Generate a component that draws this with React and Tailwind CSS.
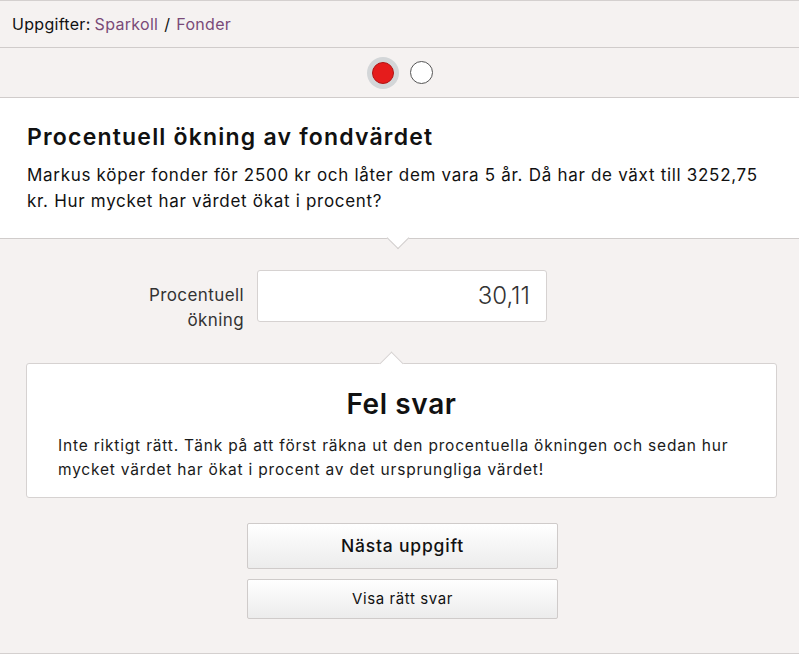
export default function App() {
  const font = { fontFamily: "Inter, 'Noto Sans', sans-serif" };
  return (
    <div className="w-[799px] h-[654px] bg-[#f5f2f1] text-[#111] flex flex-col border-t border-b border-[#d4d0cf]" style={font}>
      <div className="h-[47px] flex items-center px-3 text-[16px] tracking-[0.3px] border-b border-[#d0cccb] shrink-0">
        <span>Uppgifter:</span>
        <span className="ml-1 text-[#7a4a78]">Sparkoll</span>
        <span className="mx-1.5">/</span>
        <span className="text-[#7a4a78]">Fonder</span>
      </div>
      <div className="h-[50px] flex items-center justify-center gap-[11px] border-b border-[#d0cccb] shrink-0">
        <div className="w-[32px] h-[32px] rounded-full bg-[#d3d6d8] flex items-center justify-center">
          <div className="w-[22px] h-[22px] rounded-full bg-[#e51c1c] border border-[#b01515]" />
        </div>
        <div className="w-[23px] h-[23px] rounded-full bg-white border border-[#555]" />
      </div>
      <div className="relative bg-white border-b border-[#d0cccb] px-[27px] pt-[23px] pb-[24px] shrink-0">
        <h1 className="text-[23px] font-semibold leading-[32px] tracking-[1.2px]">Procentuell ökning av fondvärdet</h1>
        <p className="mt-[9px] text-[17px] leading-[26px] tracking-[0.7px]">
          Markus köper fonder för 2500 kr och låter dem vara 5 år. Då har de växt till 3252,75 kr. Hur mycket har värdet ökat i procent?
        </p>
        <div className="absolute left-[390px] bottom-[-8px] w-[16px] h-[16px] bg-white border-r border-b border-[#d0cccb] rotate-45" />
      </div>
      <div className="flex items-start pt-[31px] pl-[136px]">
        <div className="w-[108px] text-right text-[17px] leading-[25px] tracking-[0.4px] text-[#333] pt-[13px]">Procentuell ökning</div>
        <div className="ml-[13px] w-[290px] h-[52px] bg-white border border-[#d6d2d1] rounded-[3px] flex items-center justify-end pr-[16px] text-[24px] font-light text-[#333]">30,11</div>
      </div>
      <div className="relative ml-[26px] mr-[22px] mt-[30px] bg-white border border-[#d6d2d1] rounded-[3px] h-[135px] px-[31px] pt-[22px]">
        <div className="absolute left-[356px] top-[-9px] w-[17px] h-[17px] bg-white border-l border-t border-[#d6d2d1] rotate-45" />
        <h2 className="text-center text-[28px] font-semibold leading-[36px] tracking-[0.6px]">Fel svar</h2>
        <p className="mt-[12px] text-[15.5px] leading-[24px] text-[#1a1a1a] tracking-[0.8px]">
          Inte riktigt rätt. Tänk på att först räkna ut den procentuella ökningen och sedan hur mycket värdet har ökat i procent av det ursprungliga värdet!
        </p>
      </div>
      <div className="flex flex-col items-center mt-[25px] gap-[10px] pl-[6px]">
        <button className="w-[311px] h-[46px] border border-[#cfcbca] rounded-[2px] bg-gradient-to-b from-white to-[#ececec] text-[17.5px] tracking-[0.8px] font-medium text-[#111]">Nästa uppgift</button>
        <button className="w-[311px] h-[40px] border border-[#cfcbca] rounded-[2px] bg-gradient-to-b from-white to-[#ececec] text-[15px] tracking-[0.6px] font-normal text-[#111]">Visa rätt svar</button>
      </div>
    </div>
  );
}
